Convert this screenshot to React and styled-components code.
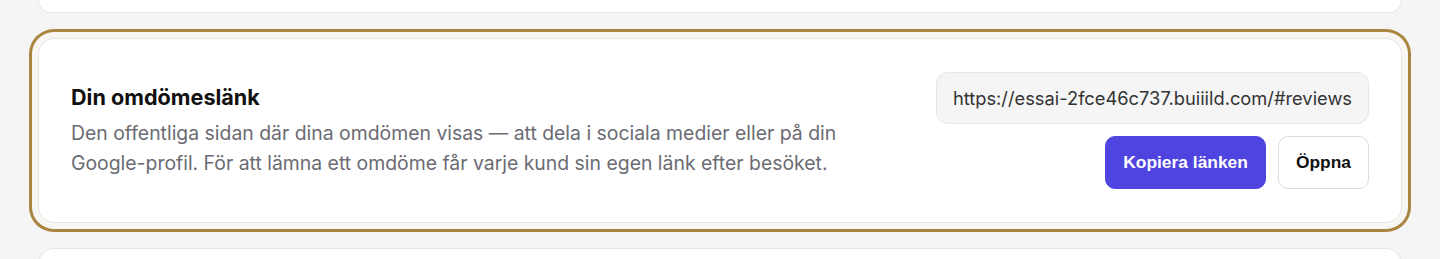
import styled, { createGlobalStyle } from "styled-components";

const GlobalStyle = createGlobalStyle`
  html, body {
    margin: 0;
    padding: 0;
    background: #f5f5f5;
    font-family: Inter, "Noto Sans", sans-serif;
  }
`;

const Page = styled.div`
  display: flex;
  flex-direction: column;
  gap: 25px;
  padding: 0 38px;
  height: 259px;
  overflow: hidden;

  & > * {
    flex-shrink: 0;
  }
`;

const CardEdge = styled.div`
  height: 12px;
  background: #fff;
  border: 1px solid #e6e6e8;
  border-top: none;
  border-radius: 0 0 16px 16px;
`;

const CardTop = styled.div`
  height: 40px;
  background: #fff;
  border: 1px solid #e6e6e8;
  border-bottom: none;
  border-radius: 16px 16px 0 0;
`;

const Card = styled.section`
  display: flex;
  align-items: center;
  justify-content: space-between;
  gap: 40px;
  padding: 33px 32px;
  background: #fff;
  border: 1px solid #e6e6e8;
  border-radius: 16px;
  box-shadow: ${({highlight}) =>
    highlight ? "0 0 0 6px #f8f7f4, 0 0 0 9px #a9853f" : "none"};
`;

const Info = styled.div`
  display: flex;
  flex-direction: column;
  gap: 7px;
  max-width: 790px;
`;

const Title = styled.h3`
  margin: 0;
  font-size: 21.6px;
  line-height: 28px;
  font-weight: 700;
  color: #111111;
`;

const Desc = styled.p`
  margin: 0;
  font-size: 19.4px;
  line-height: 30px;
  color: #6b6b73;
`;

const Actions = styled.div`
  display: flex;
  flex-direction: column;
  align-items: flex-end;
  gap: 12px;
`;

const UrlBox = styled.div`
  padding: 14px 16px;
  font-size: 18.3px;
  line-height: 22px;
  color: #333;
  background: #f5f5f5;
  border: 1px solid #e6e6e6;
  border-radius: 12px;
  white-space: nowrap;
`;

const Buttons = styled.div`
  display: flex;
  gap: 12px;
`;

const Button = styled.button`
  height: 53px;
  padding: 0 ${({primary}) => (primary ? "17px" : "17px")};
  font-family: "Liberation Sans", Arial, sans-serif;
  font-size: 17.4px;
  font-weight: 700;
  color: ${({primary}) => (primary ? "#fff" : "#111")};
  background: ${({primary}) => (primary ? "#4f44e0" : "#fff")};
  border: 1px solid ${({primary}) => (primary ? "#4f44e0" : "#dcdcdc")};
  border-radius: 10px;
  cursor: pointer;
`;

export default function App() {
  return (
    <>
      <GlobalStyle />
      <Page>
        <CardEdge />
        <Card highlight>
          <Info>
            <Title>Din omdömeslänk</Title>
            <Desc>
              Den offentliga sidan där dina omdömen visas — att dela i sociala medier eller på din
              Google-profil. För att lämna ett omdöme får varje kund sin egen länk efter besöket.
            </Desc>
          </Info>
          <Actions>
            <UrlBox>https://essai-2fce46c737.buiiild.com/#reviews</UrlBox>
            <Buttons>
              <Button primary>Kopiera länken</Button>
              <Button>Öppna</Button>
            </Buttons>
          </Actions>
        </Card>
        <CardTop />
      </Page>
    </>
  );
}
